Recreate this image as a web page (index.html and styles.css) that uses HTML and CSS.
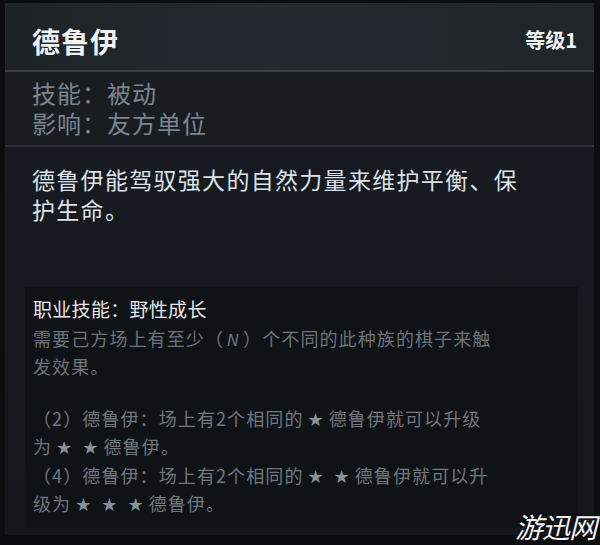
FILE: index.html
```html
<!DOCTYPE html>
<html lang="zh-CN">
<head>
<meta charset="utf-8">
<title>德鲁伊</title>
<link rel="stylesheet" href="styles.css">
</head>
<body>
<div class="page">
  <div class="card">
    <div class="header">
      <div class="title">德鲁伊</div>
      <div class="level">等级1</div>
    </div>
    <div class="info">
      <div class="info-line">技能：被动</div>
      <div class="info-line">影响：友方单位</div>
    </div>
    <div class="body">
      <p class="desc">德鲁伊能驾驭强大的自然力量来维护平衡、保<br>护生命。</p>
      <div class="box">
        <div class="box-title">职业技能：野性成长</div>
        <p class="box-text">需要己方场上有至少（<i>N</i>）个不同的此种族的棋子来触<br>发效果。</p>
        <p class="box-text tiers">（2）德鲁伊：场上有2个相同的<span class="star">★</span>德鲁伊就可以升级<br>为<span class="star">★★</span>德鲁伊。<br>（4）德鲁伊：场上有2个相同的<span class="star">★★</span>德鲁伊就可以升<br>级为<span class="star">★★★</span>德鲁伊。</p>
      </div>
    </div>
  </div>
  <div class="watermark">游迅网</div>
</div>
</body>
</html>
```

FILE: styles.css
```css
* { box-sizing: border-box; }
html, body {
  margin: 0;
  padding: 0;
  background: #0b0d10;
}
body {
  width: 600px;
  height: 545px;
  overflow: hidden;
  font-family: "Noto Sans CJK SC", "Noto Sans", sans-serif;
}
.page {
  position: relative;
  width: 600px;
  height: 545px;
  padding: 3px 6px 0 5px;
}
.card {
  width: 589px;
  height: 532px;
  background: #15191e;
  display: flex;
  flex-direction: column;
}
.header {
  height: 69px;
  padding: 21px 17px 0 27px;
  display: flex;
  justify-content: space-between;
  align-items: flex-start;
  background: linear-gradient(90deg, #1e2328 0%, #252a30 45%, #20252a 100%);
  border-bottom: 2px solid #3a3f46;
}
.title {
  font-size: 28px;
  line-height: 34px;
  font-weight: 700;
  letter-spacing: 1px;
  color: #f1f2f3;
}
.level {
  margin-top: 3px;
  font-size: 20px;
  line-height: 26px;
  font-weight: 700;
  color: #f1f2f3;
}
.info {
  padding: 6px 0 7px 27px;
  background: #191d22;
  border-bottom: 2px solid #2d3238;
}
.info-line {
  font-size: 24px;
  line-height: 30px;
  letter-spacing: 1px;
  color: #7a8591;
}
.body {
  flex: 1;
  padding: 17px 16px 0 20px;
  background: linear-gradient(180deg, #171b21 0%, #14181d 100%);
}
.desc {
  margin: 0 0 0 7px;
  font-size: 23px;
  line-height: 30px;
  letter-spacing: 1.3px;
  color: #dce1e7;
  white-space: nowrap;
}
.box {
  margin-top: 63px;
  height: 241px;
  padding: 8px 10px 0 8px;
  background: #0f1216;
}
.box-title {
  font-size: 19px;
  line-height: 28.5px;
  letter-spacing: 0.3px;
  color: #e6e7e9;
}
.box-text {
  margin: 0;
  font-size: 18px;
  line-height: 28.5px;
  letter-spacing: 1.1px;
  color: #6c737b;
  white-space: nowrap;
}
.box-text i {
  font-family: "DejaVu Sans", sans-serif;
  font-size: 16px;
  line-height: 1;
  padding: 0 3px;
}
.tiers {
  margin-top: 23px;
  color: #70777f;
}
.star {
  font-family: "DejaVu Sans", sans-serif;
  font-size: 18px;
  line-height: 1;
  letter-spacing: 10px;
  padding-left: 4px;
  margin-right: -5px;
  color: #8a9098;
}
.watermark {
  position: absolute;
  right: 4px;
  bottom: 3px;
  font-size: 28px;
  line-height: 32px;
  font-style: italic;
  font-weight: 400;
  letter-spacing: -1px;
  color: #f4f4f4;
  text-shadow: 0 0 2px #000;
}
```
